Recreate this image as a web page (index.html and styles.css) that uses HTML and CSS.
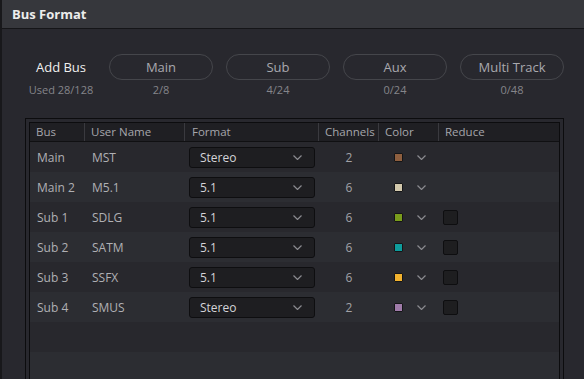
FILE: index.html
```html
<!DOCTYPE html>
<html>
<head>
<meta charset="utf-8">
<link rel="stylesheet" href="styles.css">
</head>
<body>
<div class="panel">
  <div class="titlebar">Bus Format</div>
  <div class="addrow">
    <div class="addcol first">
      <div class="addlabel">Add Bus</div>
      <div class="count">Used 28/128</div>
    </div>
    <div class="addcol">
      <div class="pill">Main</div>
      <div class="count">2/8</div>
    </div>
    <div class="addcol">
      <div class="pill">Sub</div>
      <div class="count">4/24</div>
    </div>
    <div class="addcol">
      <div class="pill">Aux</div>
      <div class="count">0/24</div>
    </div>
    <div class="addcol">
      <div class="pill">Multi Track</div>
      <div class="count">0/48</div>
    </div>
  </div>
  <div class="frame">
    <div class="table">
      <div class="row head">
        <div class="cell">Bus</div>
        <div class="cell">User Name</div>
        <div class="cell fmt-h">Format</div>
        <div class="cell">Channels</div>
        <div class="cell">Color</div>
        <div class="cell last">Reduce</div>
      </div>

      <div class="row dark">
        <div class="cell bus">Main</div>
        <div class="cell uname">MST</div>
        <div class="cell fmt"><div class="select"><span>Stereo</span><svg class="chev" viewBox="0 0 9 5"><polyline points="0.5,0.5 4.5,4.5 8.5,0.5"/></svg></div></div>
        <div class="cell ch">2</div>
        <div class="cell color"><span class="swatch brown"></span><svg class="chev" viewBox="0 0 9 5"><polyline points="0.5,0.5 4.5,4.5 8.5,0.5"/></svg></div>
        <div class="cell red"></div>
      </div>

      <div class="row light">
        <div class="cell bus">Main 2</div>
        <div class="cell uname">M5.1</div>
        <div class="cell fmt"><div class="select"><span>5.1</span><svg class="chev" viewBox="0 0 9 5"><polyline points="0.5,0.5 4.5,4.5 8.5,0.5"/></svg></div></div>
        <div class="cell ch">6</div>
        <div class="cell color"><span class="swatch beige"></span><svg class="chev" viewBox="0 0 9 5"><polyline points="0.5,0.5 4.5,4.5 8.5,0.5"/></svg></div>
        <div class="cell red"></div>
      </div>

      <div class="row dark">
        <div class="cell bus">Sub 1</div>
        <div class="cell uname">SDLG</div>
        <div class="cell fmt"><div class="select"><span>5.1</span><svg class="chev" viewBox="0 0 9 5"><polyline points="0.5,0.5 4.5,4.5 8.5,0.5"/></svg></div></div>
        <div class="cell ch">6</div>
        <div class="cell color"><span class="swatch green"></span><svg class="chev" viewBox="0 0 9 5"><polyline points="0.5,0.5 4.5,4.5 8.5,0.5"/></svg></div>
        <div class="cell red"><span class="check"></span></div>
      </div>

      <div class="row light">
        <div class="cell bus">Sub 2</div>
        <div class="cell uname">SATM</div>
        <div class="cell fmt"><div class="select"><span>5.1</span><svg class="chev" viewBox="0 0 9 5"><polyline points="0.5,0.5 4.5,4.5 8.5,0.5"/></svg></div></div>
        <div class="cell ch">6</div>
        <div class="cell color"><span class="swatch teal"></span><svg class="chev" viewBox="0 0 9 5"><polyline points="0.5,0.5 4.5,4.5 8.5,0.5"/></svg></div>
        <div class="cell red"><span class="check"></span></div>
      </div>

      <div class="row dark">
        <div class="cell bus">Sub 3</div>
        <div class="cell uname">SSFX</div>
        <div class="cell fmt"><div class="select"><span>5.1</span><svg class="chev" viewBox="0 0 9 5"><polyline points="0.5,0.5 4.5,4.5 8.5,0.5"/></svg></div></div>
        <div class="cell ch">6</div>
        <div class="cell color"><span class="swatch yellow"></span><svg class="chev" viewBox="0 0 9 5"><polyline points="0.5,0.5 4.5,4.5 8.5,0.5"/></svg></div>
        <div class="cell red"><span class="check"></span></div>
      </div>

      <div class="row light">
        <div class="cell bus">Sub 4</div>
        <div class="cell uname">SMUS</div>
        <div class="cell fmt"><div class="select"><span>Stereo</span><svg class="chev" viewBox="0 0 9 5"><polyline points="0.5,0.5 4.5,4.5 8.5,0.5"/></svg></div></div>
        <div class="cell ch">2</div>
        <div class="cell color"><span class="swatch purple"></span><svg class="chev" viewBox="0 0 9 5"><polyline points="0.5,0.5 4.5,4.5 8.5,0.5"/></svg></div>
        <div class="cell red"><span class="check"></span></div>
      </div>

      <div class="row dark empty"></div>
      <div class="row light empty"></div>
    </div>
  </div>
</div>
</body>
</html>
```

FILE: styles.css
```css
html, body {
  margin: 0;
  padding: 0;
  background: #28282e;
  font-family: "Open Sans", "Noto Sans", sans-serif;
  overflow: hidden;
}

.panel {
  width: 582px;
  height: 379px;
  border-left: 2px solid #18181b;
  background: #28282e;
  overflow: hidden;
}

.titlebar {
  height: 28px;
  line-height: 28px;
  background: #36373c;
  border-bottom: 1px solid #151518;
  padding-left: 10px;
  color: #ececec;
  font-weight: 700;
  font-size: 13px;
}

.addrow {
  display: flex;
  gap: 13px;
  padding: 25px 0 0 24px;
  height: 64px;
}

.addcol {
  width: 104px;
  display: flex;
  flex-direction: column;
  align-items: center;
}

.addcol.first {
  width: 70px;
}

.addlabel {
  height: 26px;
  line-height: 26px;
  color: #f0f0f0;
  font-size: 13px;
  white-space: nowrap;
}

.pill {
  box-sizing: border-box;
  width: 104px;
  height: 26px;
  line-height: 24px;
  border: 1px solid #45464b;
  border-radius: 13px;
  text-align: center;
  color: #a9a9ae;
  font-size: 13px;
}

.count {
  margin-top: 2px;
  line-height: 16px;
  font-size: 11px;
  color: #85858a;
  white-space: nowrap;
}

.frame {
  margin-left: 23px;
  width: 539px;
  box-sizing: border-box;
  border: 1px solid #0c0c0e;
  border-bottom: none;
  padding: 3px 3px 0 3px;
  height: 300px;
}

.table {
  border: 1px solid #0c0c0e;
  border-bottom: none;
  height: 300px;
}

.row {
  display: grid;
  grid-template-columns: 55px 100px 134px 60px 60px 1fr;
  height: 30px;
  align-items: center;
}

.row.head {
  height: 18px;
  background: #1f1f23;
  border-bottom: 1px solid #101012;
}

.row.head .cell {
  height: 18px;
  line-height: 18px;
  border-right: 1px solid #3a3a3f;
  padding-left: 6px;
  color: #a6a6ab;
  font-size: 11.5px;
  white-space: nowrap;
}

.row.head .cell.fmt-h {
  padding-left: 7px;
}

.row.head .cell.last {
  border-right: none;
}

.row.dark {
  background: #28282d;
}

.row.light {
  background: #2c2d32;
}

.cell {
  box-sizing: border-box;
  font-size: 12px;
  color: #b0b0b4;
}

.cell.bus, .cell.uname {
  padding-left: 7px;
  white-space: nowrap;
}

.cell.fmt {
  padding-left: 4px;
}

.select {
  box-sizing: border-box;
  width: 126px;
  height: 21px;
  background: #1e1e21;
  border: 1px solid #0e0e10;
  border-radius: 3px;
  display: flex;
  align-items: center;
  justify-content: space-between;
  padding: 0 12px 0 10px;
  color: #d4d4d8;
  font-size: 12px;
}

.chev {
  width: 9px;
  height: 5px;
  fill: none;
  stroke: #8a8a8f;
  stroke-width: 1.2;
}

.cell.ch {
  text-align: center;
  color: #a2a2a6;
}

.cell.color {
  display: flex;
  align-items: center;
  padding-left: 15px;
  gap: 14px;
}

.swatch {
  box-sizing: border-box;
  width: 9px;
  height: 9px;
  border: 1px solid #151517;
  border-radius: 1px;
}

.swatch.brown { background: #8e5f3f; }
.swatch.beige { background: #d2c8ac; }
.swatch.green { background: #7a9c1c; }
.swatch.teal { background: #0f9c9c; }
.swatch.yellow { background: #f2b22e; }
.swatch.purple { background: #9f7ba9; }

.cell.red {
  padding-left: 4px;
  display: flex;
  align-items: center;
}

.check {
  box-sizing: border-box;
  width: 15px;
  height: 15px;
  background: #1e1e20;
  border: 1px solid #0e0e10;
  border-radius: 2px;
}
```
